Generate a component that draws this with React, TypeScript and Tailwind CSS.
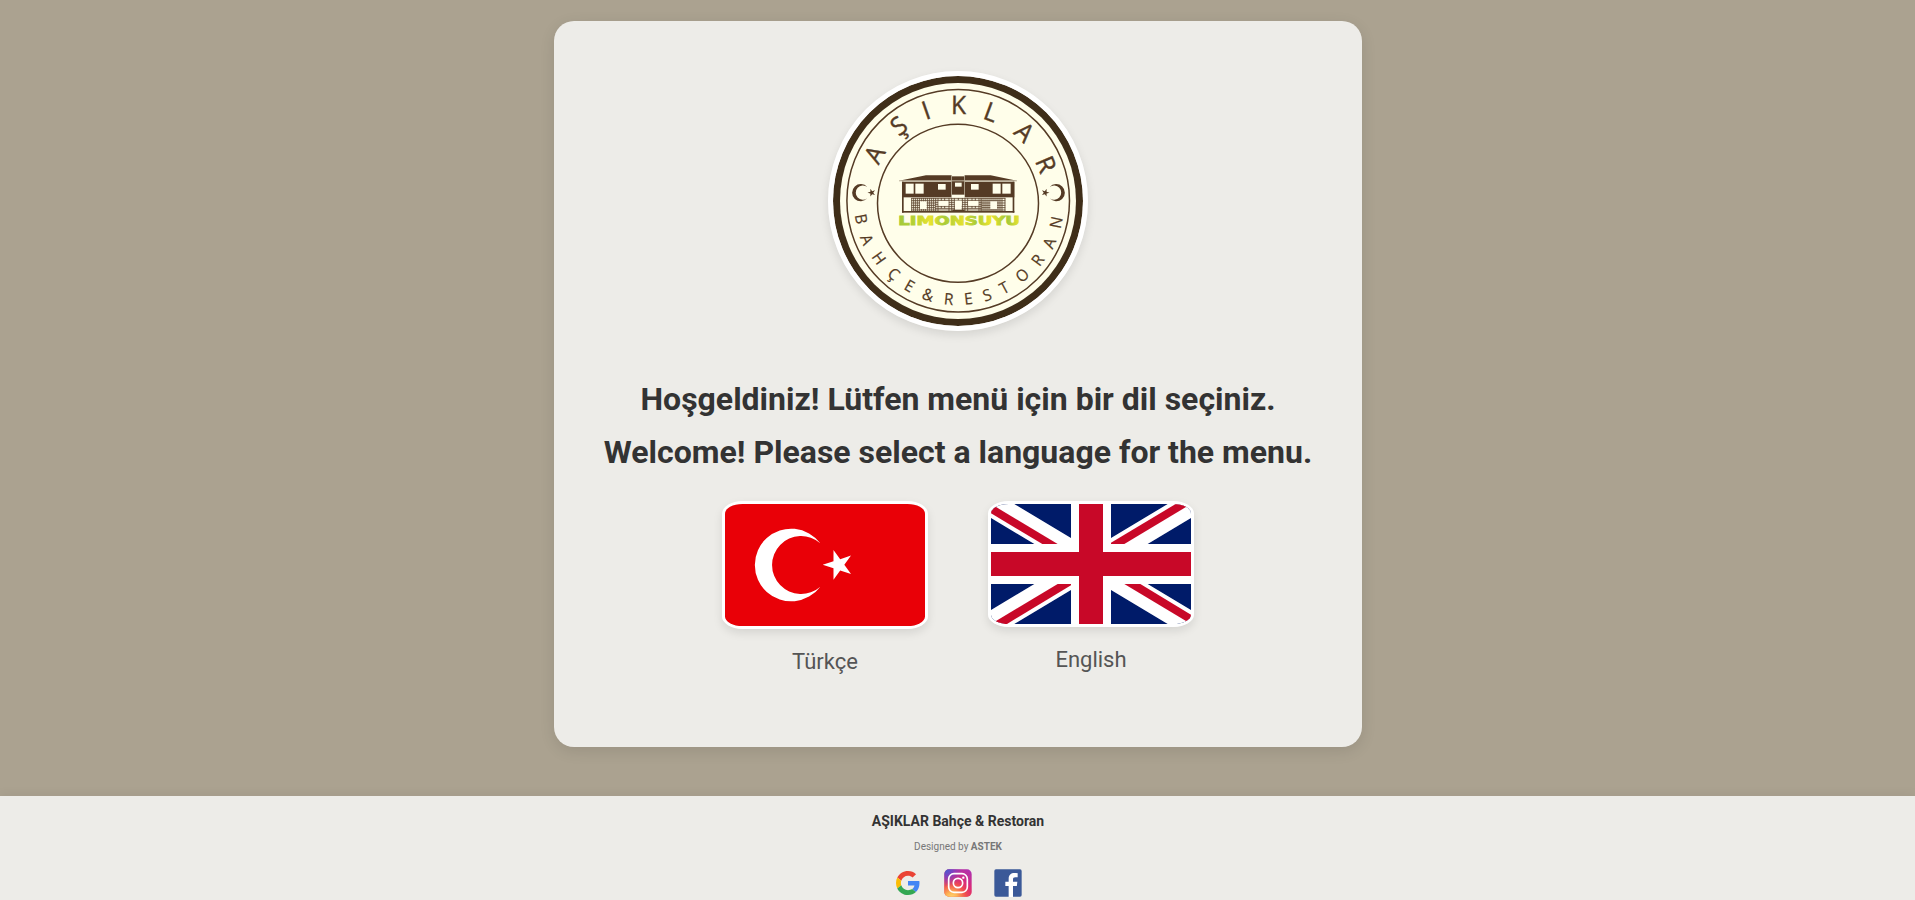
type Glyph = [string, number, number];

const topLetters: Glyph[] = [
  ["A", 163, 283], ["Ş", 236, 197], ["I", 318, 151], ["K", 416, 135],
  ["L", 513, 156], ["A", 614, 216], ["R", 678, 313],
];

const bottomLetters: Glyph[] = [
  ["B", 124, 477], ["A", 141, 539], ["H", 177, 594], ["Ç", 222, 642], ["E", 269, 678],
  ["&", 324, 704], ["R", 386, 717], ["E", 445, 716], ["S", 501, 705], ["T", 553, 683],
  ["O", 607, 646], ["R", 653, 600], ["A", 688, 549], ["N", 708, 487],
];

const CX = 414;
const CY = 426;

function StarShape({ cx, cy, r, rot = 0 }: { cx: number; cy: number; r: number; rot?: number }) {
  const pts = Array.from({ length: 10 }, (_, i) => {
    const a = ((rot + i * 36) * Math.PI) / 180;
    const q = i % 2 ? r * 0.382 : r;
    return `${(cx + q * Math.cos(a)).toFixed(2)},${(cy + q * Math.sin(a)).toFixed(2)}`;
  });
  return <polygon points={pts.join(" ")} />;
}

function House() {
  return (
    <g transform="translate(47 84) scale(0.3333)">
      <g fill="#553b25">
        <path d="M57 62 L138 46 H215 V62 Z M254 46 H332 L411 62 H254 Z" />
        <rect x="215" y="49" width="39" height="55" />
        <rect x="66" y="65" width="149" height="47" />
        <rect x="254" y="65" width="149" height="47" />
        <rect x="66" y="65" width="5" height="93" />
        <rect x="398" y="65" width="5" height="93" />
        <rect x="66" y="153" width="337" height="5" />
      </g>
      <g fill="#bfb5a0">
        <rect x="57" y="61" width="354" height="3" />
        <rect x="214" y="46" width="2" height="66" />
        <rect x="253" y="46" width="2" height="66" />
      </g>
      <g fill="#fffeea">
        <rect x="77" y="71" width="24" height="30" />
        <rect x="106" y="71" width="25" height="30" />
        <rect x="338" y="71" width="24" height="30" />
        <rect x="367" y="71" width="25" height="30" />
        <rect x="174" y="72" width="23" height="17" />
        <rect x="273" y="72" width="23" height="17" />
        <rect x="225" y="68" width="20" height="12" />
      </g>
      <g fill="none" stroke="#5f4832" strokeWidth="2.600">
        <path d="M94 115 H165 M94 122 H165 M94 129 H165 M94 136 H165 M94 143 H165 M94 150 H165 M305 115 H376 M305 122 H376 M305 129 H376 M305 136 H376 M305 143 H376 M305 150 H376" />
        <path d="M95 114 V154 M101 114 V154 M107 114 V154 M113 114 V154 M119 114 V154 M125 114 V154 M131 114 V154 M137 114 V154 M143 114 V154 M149 114 V154 M155 114 V154 M161 114 V154 M306 114 V154 M312 114 V154 M318 114 V154 M324 114 V154 M330 114 V154 M336 114 V154 M342 114 V154 M348 114 V154 M354 114 V154 M360 114 V154 M366 114 V154 M375 114 V154" />
        <path d="M165 115 H305 M165 121 H305 M165 139 H305 M165 145 H305 M165 150 H305 M165 127 H175 M165 133 H175 M206 127 H224 M206 133 H224 M246 127 H264 M246 133 H264 M296 127 H305 M296 133 H305" />
        <path d="M167 114 V154 M174 114 V154 M184 114 V122 M194 114 V122 M184 138 V145 M194 138 V145 M207 114 V154 M215 114 V154 M223 114 V154 M235 114 V122 M247 114 V154 M255 114 V154 M263 114 V154 M276 114 V122 M286 114 V122 M276 138 V145 M286 138 V145 M297 114 V154 M303 114 V154" />
      </g>
      <g fill="#fffeea">
        <rect x="120" y="124" width="20" height="23" />
        <rect x="331" y="124" width="20" height="23" />
        <rect x="176" y="123" width="29" height="14" />
        <rect x="265" y="123" width="30" height="14" />
        <rect x="225" y="122" width="20" height="28" />
        <rect x="216" y="105" width="37" height="7" />
      </g>
      <rect x="217" y="149" width="37" height="7" fill="#553b25" />
      <text
        x="55" y="194.500" textLength="365" lengthAdjust="spacingAndGlyphs" fontSize="36"
        fontWeight="700" fill="url(#lemon)" stroke="url(#lemon)" strokeWidth="2.500"
        className="font-['DejaVu_Sans',sans-serif]"
      >
        LIMONSUYU
      </text>
    </g>
  );
}

function Logo() {
  return (
    <svg viewBox="0 0 250 250" className="block size-[250px]" role="img" aria-label="Aşıklar">
      <defs>
        <linearGradient id="lemon" gradientUnits="userSpaceOnUse" x1="57" y1="0" x2="418" y2="0">
          <stop offset="0" stopColor="#a3c93b" />
          <stop offset="0.120" stopColor="#b5d034" />
          <stop offset="0.260" stopColor="#e9e32f" />
          <stop offset="0.380" stopColor="#a9cb38" />
          <stop offset="0.530" stopColor="#e3e02f" />
          <stop offset="0.640" stopColor="#a9cb38" />
          <stop offset="0.760" stopColor="#ece42e" />
          <stop offset="0.900" stopColor="#a3c93b" />
          <stop offset="1" stopColor="#e9e32f" />
        </linearGradient>
      </defs>
      <circle cx="125" cy="125" r="125" fill="#3f2e19" />
      <circle cx="125" cy="125" r="118" fill="#fffeea" />
      <circle cx="125.200" cy="124.800" r="111.300" fill="none" stroke="#553b25" strokeWidth="1.500" />
      <ellipse cx="125" cy="127.300" rx="80.500" ry="79" fill="none" stroke="#553b25" strokeWidth="1.500" />
      <g fill="#553b25" stroke="#553b25" textAnchor="middle" className="font-['Open_Sans',sans-serif]">
        {topLetters.map(([c, x, y], i) => (
          <text
            key={i} fontSize="25.500" y="9.100" strokeWidth="0.400"
            transform={`translate(${x / 3 - 13} ${y / 3 - 16}) rotate(${(Math.atan2(x - CX, CY - y) * 180) / Math.PI}) scale(0.96 1)`}
          >
            {c}
          </text>
        ))}
        {bottomLetters.map(([c, x, y], i) => (
          <text
            key={i} fontSize="16" y="5.700" strokeWidth="0.200"
            transform={`translate(${x / 3 - 13} ${y / 3 - 16}) rotate(${(-Math.atan2(x - CX, y - CY) * 180) / Math.PI}) scale(0.96 1)`}
          >
            {c}
          </text>
        ))}
      </g>
      <g fill="#553b25" transform="translate(-13 -16) scale(0.3333)">
        <path d="M142 381 A26 26 0 1 0 142 415 A21.500 21.500 0 1 1 142 381 Z" />
        <StarShape cx={155} cy={398} r={12.5} rot={180} />
        <path d="M689 381 A26 26 0 1 1 689 415 A21.500 21.500 0 1 0 689 381 Z" />
        <StarShape cx={676} cy={398} r={12.5} />
      </g>
      <House />
    </svg>
  );
}

function TurkishFlag() {
  return (
    <svg viewBox="0 0 600 366" className="block h-[122px] w-[200px]" preserveAspectRatio="none">
      <rect width="600" height="366" fill="#e90007" />
      <path d="M286 118 A109 109 0 1 0 286 248 A87 87 0 1 1 286 118 Z" fill="#fff" />
      <g fill="#fff">
        <StarShape cx={340} cy={182.5} r={47} rot={180} />
      </g>
    </svg>
  );
}

function BritishFlag() {
  return (
    <svg viewBox="0 0 600 360" className="block h-[120px] w-[200px]">
      <rect width="600" height="360" fill="#001b69" />
      <path d="M0 0 L600 360 M600 0 L0 360" stroke="#fff" strokeWidth="72" />
      <g fill="#c80828">
        <path d="M0 0 L200 120 H154 L0 28 Z" />
        <path d="M600 0 H554 L360 116 V120 H400 Z" />
        <path d="M0 360 H48 L240 244 V240 H200 Z" />
        <path d="M600 360 L400 240 H448 L600 332 Z" />
      </g>
      <path d="M300 0 V360 M0 180 H600" stroke="#fff" strokeWidth="120" />
      <path d="M300 0 V360 M0 180 H600" stroke="#c80828" strokeWidth="72" />
    </svg>
  );
}

function GoogleIcon() {
  return (
    <svg viewBox="-4 -4 56 56" className="block size-7">
      <path fill="#ea4335" d="M24 9.500c3.540 0 6.710 1.220 9.210 3.600l6.850-6.850C35.900 2.380 30.470 0 24 0 14.620 0 6.510 5.380 2.560 13.220l7.980 6.190C12.430 13.720 17.740 9.500 24 9.500z" />
      <path fill="#4285f4" d="M46.980 24.550c0-1.570-.15-3.090-.38-4.550H24v9.020h12.940c-.58 2.960-2.260 5.480-4.780 7.180l7.730 6c4.510-4.180 7.090-10.360 7.090-17.650z" />
      <path fill="#fbbc05" d="M10.530 28.590c-.48-1.450-.76-2.990-.76-4.590s.27-3.140.76-4.590l-7.980-6.190C.92 16.460 0 20.120 0 24c0 3.880.92 7.540 2.560 10.780l7.970-6.190z" />
      <path fill="#34a853" d="M24 48c6.480 0 11.930-2.130 15.890-5.810l-7.730-6c-2.150 1.450-4.920 2.300-8.160 2.300-6.260 0-11.570-4.220-13.470-9.910l-7.980 6.190C6.510 42.620 14.620 48 24 48z" />
    </svg>
  );
}

function InstagramIcon() {
  return (
    <svg viewBox="0 0 84 84" className="block size-7">
      <defs>
        <linearGradient id="ig-base" x1="1" y1="0" x2="0.300" y2="1">
          <stop offset="0" stopColor="#a832b8" />
          <stop offset="0.500" stopColor="#dc2a76" />
          <stop offset="1" stopColor="#f0503c" />
        </linearGradient>
        <radialGradient id="ig-warm" cx="0.270" cy="1.050" r="0.850">
          <stop offset="0" stopColor="#ffdb75" />
          <stop offset="0.250" stopColor="#fdb455" />
          <stop offset="0.600" stopColor="#f4574a" stopOpacity="0.800" />
          <stop offset="1" stopColor="#dc2a76" stopOpacity="0" />
        </radialGradient>
        <radialGradient id="ig-cool" cx="0.050" cy="0" r="0.650">
          <stop offset="0" stopColor="#3f5fd0" />
          <stop offset="0.400" stopColor="#6f45cc" stopOpacity="0.850" />
          <stop offset="1" stopColor="#8a3ac8" stopOpacity="0" />
        </radialGradient>
      </defs>
      <rect x="1" y="1" width="82" height="82" rx="14" fill="url(#ig-base)" />
      <rect x="1" y="1" width="82" height="82" rx="14" fill="url(#ig-warm)" />
      <rect x="1" y="1" width="82" height="82" rx="14" fill="url(#ig-cool)" />
      <rect x="14" y="14" width="56" height="56" rx="16" fill="none" stroke="#fff" strokeWidth="5" />
      <circle cx="42" cy="42" r="14" fill="none" stroke="#fff" strokeWidth="5" />
      <circle cx="58" cy="26" r="3.500" fill="#fff" />
    </svg>
  );
}

function FacebookIcon() {
  return (
    <svg viewBox="0 0 84 84" className="block size-7">
      <rect x="1" y="1" width="82" height="82" rx="5" fill="#3b5998" />
      <path fill="#fff" d="M44 84 V51 H34 V38 H44 V29 C44 18 51 12 61 12 C66 12 69 12.500 71 13 V24.500 H64 C58.500 24.500 57 27 57 31 V38 H70 L68.500 51 H57 V84 Z" />
    </svg>
  );
}

export default function App() {
  return (
    <div className="flex h-[900px] flex-col overflow-hidden bg-[#aba290] font-['Roboto',sans-serif]">
      <main className="flex h-[796px] shrink-0 flex-col items-center pt-[21px]">
        <section className="flex h-[726px] w-[808px] flex-col items-center rounded-[20px] bg-[#edece8] pt-[50px] shadow-[0_4px_15px_rgba(0,0,0,0.1)]">
          <div className="overflow-hidden rounded-full border-[5px] border-white shadow-[0_4px_10px_rgba(0,0,0,0.1)]">
            <Logo />
          </div>
          <h1 className="mt-[42px] pl-px text-center text-[32px] leading-[53px] font-bold whitespace-nowrap text-[#333]">
            Hoşgeldiniz! Lütfen menü için bir dil seçiniz.
            <br />
            Welcome! Please select a language for the menu.
          </h1>
          <div className="mt-[22px] flex items-start gap-[60px]">
            <a className="flex flex-col items-center">
              <span className="overflow-hidden rounded-[10%] border-[3px] border-white shadow-[0_4px_10px_rgba(0,0,0,0.1)]">
                <TurkishFlag />
              </span>
              <span className="mt-[15px] pl-px text-[22px] leading-[36px] text-[#555]">Türkçe</span>
            </a>
            <a className="flex flex-col items-center">
              <span className="overflow-hidden rounded-[10%] border-[3px] border-white shadow-[0_4px_10px_rgba(0,0,0,0.1)]">
                <BritishFlag />
              </span>
              <span className="mt-[15px] pl-px text-[22px] leading-[36px] text-[#555]">English</span>
            </a>
          </div>
        </section>
      </main>
      <footer className="flex grow flex-col items-center bg-[#edece8] pt-[15px] shadow-[0_-2px_10px_rgba(0,0,0,0.05)]">
        <p className="pl-px text-[14px] leading-[20px] font-bold text-[#333]">AŞIKLAR Bahçe &amp; Restoran</p>
        <p className="mt-[8px] pl-px text-[10px] leading-[15px] text-[#777]">
          Designed by <b>ASTEK</b>
        </p>
        <div className="mt-[15px] flex gap-[22px] pl-px">
          <GoogleIcon />
          <InstagramIcon />
          <FacebookIcon />
        </div>
      </footer>
    </div>
  );
}
